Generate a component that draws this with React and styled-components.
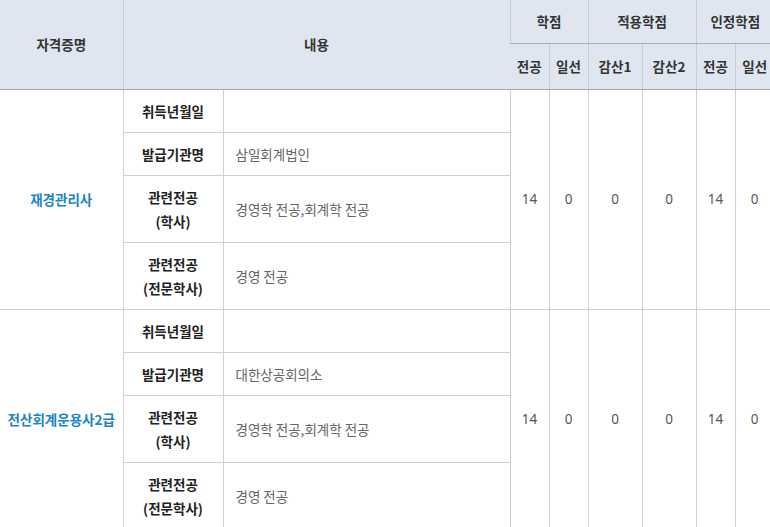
import React from "react";
import styled, { createGlobalStyle } from "styled-components";

const GlobalStyle = createGlobalStyle`
  html, body {
    margin: 0;
    padding: 0;
    background: #fff;
    overflow: hidden;
  }
  body {
    font-family: "Noto Sans CJK KR", "Noto Sans", sans-serif;
    font-size: 13.5px;
  }
`;

const Wrapper = styled.div`
  width: 770px;
  overflow: hidden;
`;

const Table = styled.table`
  width: 774px;
  table-layout: fixed;
  border-collapse: collapse;
  border-spacing: 0;
  font-size: 13.5px;
`;

const HeadCell = styled.th`
  background: #dfe6f0;
  color: #333;
  font-weight: 700;
  line-height: 24px;
  padding: 0;
  white-space: nowrap;
  text-align: center;
  border-left: 1px solid #c6ccd4;
  border-bottom: 1px solid ${({ $sub }) => ($sub ? "#a9b0ba" : "#a3a8b0")};
  &:first-child {
    border-left: none;
  }
`;

const HeadRow = styled.tr`
  height: ${({ $h }) => $h}px;
`;

const BodyRow = styled.tr`
  height: ${({ $h }) => $h}px;
`;

const Cell = styled.td`
  border: 1px solid #d0d0d0;
  padding: 9px 0;
  line-height: 24px;
  text-align: center;
  vertical-align: middle;
  white-space: nowrap;
  color: #555;
`;

const CertCell = styled(Cell)`
  border-left: none;
  color: #1a84c7;
  font-weight: 700;
`;

const LabelCell = styled(Cell)`
  color: #222;
  font-weight: 700;
`;

const ValueCell = styled(Cell)`
  text-align: left;
  padding-left: 12px;
  color: #666;
`;

const NumCell = styled(Cell)`
  font-family: "Noto Sans", "Noto Sans CJK KR", sans-serif;
  color: #555;
`;

const widths = [123, 100, 287, 39, 39, 54, 54, 39, 39];

const certs = [
  {
    name: "재경관리사",
    issuer: "삼일회계법인",
    nums: [14, 0, 0, 0, 14, 0],
  },
  {
    name: "전산회계운용사2급",
    issuer: "대한상공회의소",
    nums: [14, 0, 0, 0, 14, 0],
  },
];

function CertBlock({ cert }) {
  return (
    <>
      <BodyRow $h={43}>
        <CertCell rowSpan={4}>{cert.name}</CertCell>
        <LabelCell>취득년월일</LabelCell>
        <ValueCell></ValueCell>
        {cert.nums.map((n, i) => (
          <NumCell key={i} rowSpan={4}>
            {n}
          </NumCell>
        ))}
      </BodyRow>
      <BodyRow $h={43}>
        <LabelCell>발급기관명</LabelCell>
        <ValueCell>{cert.issuer}</ValueCell>
      </BodyRow>
      <BodyRow $h={67}>
        <LabelCell>
          관련전공
          <br />
          (학사)
        </LabelCell>
        <ValueCell>경영학 전공,회계학 전공</ValueCell>
      </BodyRow>
      <BodyRow $h={67}>
        <LabelCell>
          관련전공
          <br />
          (전문학사)
        </LabelCell>
        <ValueCell>경영 전공</ValueCell>
      </BodyRow>
    </>
  );
}

export default function App() {
  return (
    <Wrapper>
      <GlobalStyle />
      <Table>
        <colgroup>
          {widths.map((w, i) => (
            <col key={i} style={{ width: w }} />
          ))}
        </colgroup>
        <thead>
          <HeadRow $h={43}>
            <HeadCell rowSpan={2}>자격증명</HeadCell>
            <HeadCell rowSpan={2} colSpan={2}>
              내용
            </HeadCell>
            <HeadCell colSpan={2} $sub>
              학점
            </HeadCell>
            <HeadCell colSpan={2} $sub>
              적용학점
            </HeadCell>
            <HeadCell colSpan={2} $sub>
              인정학점
            </HeadCell>
          </HeadRow>
          <HeadRow $h={46}>
            <HeadCell>전공</HeadCell>
            <HeadCell>일선</HeadCell>
            <HeadCell>감산1</HeadCell>
            <HeadCell>감산2</HeadCell>
            <HeadCell>전공</HeadCell>
            <HeadCell>일선</HeadCell>
          </HeadRow>
        </thead>
        <tbody>
          {certs.map((c) => (
            <CertBlock key={c.name} cert={c} />
          ))}
        </tbody>
      </Table>
    </Wrapper>
  );
}
